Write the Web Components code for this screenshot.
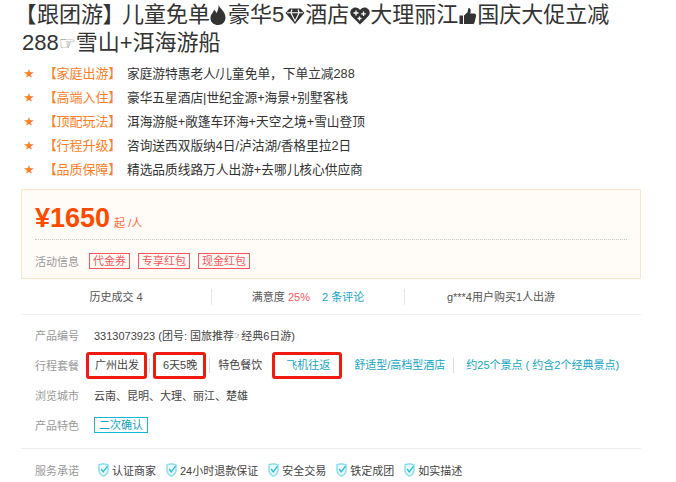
<!DOCTYPE html>
<html lang="zh">
<head>
<meta charset="utf-8">
<title>产品详情</title>
<style>
  html, body { margin: 0; background: #fff; }
  body { font-family: "Liberation Sans", "Noto Sans CJK SC", sans-serif; color: #333; overflow: hidden; }
</style>
</head>
<body>
<product-info></product-info>
<script>
const ICONS = {
  fire: '<path d="M10.500 .5c.6 3.600 7 6.500 7 13 0 4.500-3.200 7.500-7.200 7.500C6 21 2.500 18.500 2.500 14.200c0-4 2.800-5.200 3.500-8.400 1.400.8 2 2 2.200 3.400C9.800 7.200 11 4 10.500 .5z" fill="#333"/>',
  gem: '<path d="M5.500 4.500h11l4 4.500L11 20 1.500 9z" fill="#333"/><path d="M3 8.800h16M8 5.500 6.800 8.800 11 17l4.200-8.200L14 5.500" stroke="#fff" stroke-width="1.100" fill="none"/>',
  heart: '<path d="M11 20.500 2.500 12C-.5 8 2.500 3.500 6.500 3.500c2 0 3.500 1 4.500 2.500 1-1.500 2.500-2.500 4.500-2.500 4 0 7 4.500 4 8.500z" fill="#333"/><path d="M7 6.500v5M4.500 9h5M14.500 7.500v4.500M12.200 9.800h4.600M10.500 12.500v4M8.500 14.500h4" stroke="#fff" stroke-width="1.300" fill="none"/>',
  thumb: '<path d="M2.500 11.500h3.500v8.500H2.500zM7 11.500l3.500-3.200L11.500 4c2 0 2.800 2.300 1.800 5.500h3.700c1.800 0 2.500 1.500 2 3l-1.500 6c-.3 1.200-1 1.500-2 1.500H7z" fill="#333"/>'
};

class TitleIcon extends HTMLElement {
  connectedCallback() {
    this.attachShadow({ mode: 'open' });
    this.shadowRoot.innerHTML = `
      <style>
        :host { display: inline-block; width: var(--w, 20px); height: 22px; vertical-align: -4px; }
        svg { display: block; width: 22px; height: 22px; margin-left: calc((var(--w, 20px) - 22px) / 2); }
      </style>
      <svg viewBox="0 0 22 22">${ICONS[this.getAttribute('name')]}</svg>`;
  }
}
customElements.define('title-icon', TitleIcon);

class ProductTitle extends HTMLElement {
  connectedCallback() {
    this.attachShadow({ mode: 'open' });
    this.shadowRoot.innerHTML = `
      <style>
        :host { display: block; width: 620px; margin-left: 22px; padding-top: 1px; font-size: 22px; line-height: 28px; color: #333; }
      </style>
      <slot></slot>`;
  }
}
customElements.define('product-title', ProductTitle);

class SellingPoint extends HTMLElement {
  connectedCallback() {
    this.attachShadow({ mode: 'open' });
    this.shadowRoot.innerHTML = `
      <style>
        :host { display: flex; height: 24px; align-items: center; font-size: 12.700px; color: #333; white-space: nowrap; }
        .star { box-sizing: border-box; width: 50px; padding-left: 24px; color: #ff7d26; font-size: 10px; }
        .tag { width: 77px; color: #ff7d26; font-size: 13px; font-feature-settings: "palt"; }
      </style>
      <span class="star">★</span>
      <span class="tag">【${this.getAttribute('tag')}】</span>
      <span><slot></slot></span>`;
  }
}
customElements.define('selling-point', SellingPoint);

class PriceBox extends HTMLElement {
  connectedCallback() {
    this.attachShadow({ mode: 'open' });
    this.shadowRoot.innerHTML = `
      <style>
        :host { display: block; box-sizing: border-box; width: 620px; height: 90px; margin-left: 21px; background: #fffcf7; border: 1px solid #fde4cb; padding: 0 13px; }
        .price { height: 50px; box-sizing: border-box; border-bottom: 1px dotted #c9c9c9; display: flex; align-items: baseline; padding-top: 13px; color: #ff4a00; }
        b { font-size: 27px; line-height: 30px; }
        small { margin-left: 4px; font-size: 11px; color: #ff6a3c; }
        .promo { display: flex; align-items: center; box-sizing: border-box; height: 38px; padding-top: 4px; font-size: 11px; color: #999; }
        .promo span { margin-right: 8px; box-sizing: border-box; height: 16px; line-height: 14px; border: 1px solid #f9565e; color: #f9565e; padding: 0 3px; }
        .promo label { width: 54px; }
      </style>
      <div class="price"><b>¥1650</b><small>起 /人</small></div>
      <div class="promo"><label>活动信息</label><span>代金券</span><span>专享红包</span><span>现金红包</span></div>`;
  }
}
customElements.define('price-box', PriceBox);

class StatsBar extends HTMLElement {
  connectedCallback() {
    this.attachShadow({ mode: 'open' });
    this.shadowRoot.innerHTML = `
      <style>
        :host { display: grid; grid-template-columns: 190px 193px 193px; box-sizing: border-box; width: 620px; height: 36px; margin-left: 21px; border-bottom: 1px solid #eee; font-size: 11px; color: #555; align-items: center; text-align: center; }
        div { height: 16px; line-height: 16px; }
        div + div { border-left: 1px solid #e6e6e6; }
        .r { color: #f9565e; }
        .c { color: #12a5c4; margin-left: 12px; }
      </style>
      <div>历史成交 4</div>
      <div>满意度 <span class="r">25%</span><span class="c">2 条评论</span></div>
      <div>g***4用户购买1人出游</div>`;
  }
}
customElements.define('stats-bar', StatsBar);

class InfoRow extends HTMLElement {
  connectedCallback() {
    this.attachShadow({ mode: 'open' });
    this.shadowRoot.innerHTML = `
      <style>
        :host { display: flex; align-items: center; height: 30px; padding-left: 35px; font-size: 11px; color: #444; white-space: nowrap; }
        label { width: 59px; flex: none; color: #999; }
      </style>
      <label>${this.getAttribute('label')}</label><slot></slot>`;
  }
}
customElements.define('info-row', InfoRow);

class RouteOption extends HTMLElement {
  connectedCallback() {
    this.attachShadow({ mode: 'open' });
    this.shadowRoot.innerHTML = `
      <style>
        :host { display: block; flex: none; box-sizing: border-box; line-height: 21px; white-space: nowrap; }
        :host([marked]) { border: 3px solid #f01a10; border-radius: 3px; }
        :host([link]) { color: #12a5c4; }
      </style>
      <slot></slot>`;
  }
}
customElements.define('route-option', RouteOption);

class ServiceItem extends HTMLElement {
  connectedCallback() {
    this.attachShadow({ mode: 'open' });
    this.shadowRoot.innerHTML = `
      <style>
        :host { display: inline-flex; align-items: center; gap: 3px; margin-right: 10px; font-size: 11px; color: #444; white-space: nowrap; }
        svg { width: 11px; height: 14px; flex: none; }
      </style>
      <svg viewBox="0 0 11 14"><path d="M1 1.800 5.500.8l4.500 1V7.500c0 2.700-2.200 4.500-4.500 5.700C3.200 12 1 10.200 1 7.500z" fill="#e9f9fc" stroke="#8ce0ee" stroke-width="1.500"/><path d="M3.200 6 5.200 8.800 9.500 3.200" fill="none" stroke="#29bdd6" stroke-width="1.300"/></svg>
      <slot></slot>`;
  }
}
customElements.define('service-item', ServiceItem);

class ProductInfo extends HTMLElement {
  connectedCallback() {
    this.attachShadow({ mode: 'open' });
    this.shadowRoot.innerHTML = `
      <style>
        :host { display: block; width: 676px; height: 482px; overflow: hidden; }
        .points { margin: 3px 0 9px; }
        .list { padding-top: 4px; height: 133px; box-sizing: border-box; }
        .sep { width: 620px; margin-left: 21px; border-top: 1px solid #eee; }
        i { width: 1px; height: 15px; background: #ddd; flex: none; }
        .tag { box-sizing: border-box; border: 1px solid #16b8d4; color: #12a5c4; height: 16px; line-height: 14px; padding: 0 4px; }
        .foot label { color: #999; font-size: 11px; width: 63px; }
        .foot { display: flex; align-items: center; padding: 13px 0 0 35px; }
        .bracket { font-feature-settings: "palt"; }
        .open { padding-left: 3px; margin-right: 1px; }
        .close { margin-right: 8px; }
        .hand { font-family: "DejaVu Sans", sans-serif; font-size: 19px; color: #777; }
        .small-hand { font-family: "DejaVu Sans", sans-serif; font-size: 8px; color: #333; }
      </style>
      <product-title><span class="bracket open">【</span>跟团游<span class="bracket close">】</span>儿童免单<title-icon name="fire" style="--w:18px"></title-icon>豪华5<title-icon name="gem" style="--w:21px"></title-icon>酒店<title-icon name="heart" style="--w:21px"></title-icon>大理丽江<title-icon name="thumb" style="--w:19px"></title-icon>国庆大促立减<br>288<span class="hand">☞</span>雪山+洱海游船</product-title>
      <div class="points">
        <selling-point tag="家庭出游">家庭游特惠老人/儿童免单，下单立减288</selling-point>
        <selling-point tag="高端入住">豪华五星酒店|世纪金源+海景+别墅客栈</selling-point>
        <selling-point tag="顶配玩法">洱海游艇+敞篷车环海+天空之境+雪山登顶</selling-point>
        <selling-point tag="行程升级">咨询送西双版纳4日/泸沽湖/香格里拉2日</selling-point>
        <selling-point tag="品质保障">精选品质线路万人出游+去哪儿核心供应商</selling-point>
      </div>
      <price-box></price-box>
      <stats-bar></stats-bar>
      <div class="list">
        <info-row label="产品编号" style="height:30px;padding-top:1px">3313073923 (团号: 国旅推荐<span class="small-hand">☞</span>经典6日游)</info-row>
        <info-row label="行程套餐">
          <route-option marked style="margin-left:-8px;padding:0 5px 0 6px">广州出发</route-option>
          <i style="margin:0 3px 0 2px"></i>
          <route-option marked style="padding:0 6px 0 7px">6天5晚</route-option>
          <i style="margin:0 8px 0 3px"></i>
          <route-option>特色餐饮</route-option>
          <route-option marked link style="margin-left:10px;padding:0 9px 0 11px">飞机往返</route-option>
          <route-option link style="margin-left:12px">舒适型/高档型酒店</route-option>
          <i style="margin:0 12px 0 8px"></i>
          <route-option link>约25个景点 ( 约含2个经典景点)</route-option>
        </info-row>
        <info-row label="浏览城市">云南、昆明、大理、丽江、楚雄</info-row>
        <info-row label="产品特色"><span class="tag">二次确认</span></info-row>
      </div>
      <div class="sep"></div>
      <div class="foot">
        <label>服务承诺</label>
        <service-item>认证商家</service-item>
        <service-item>24小时退款保证</service-item>
        <service-item>安全交易</service-item>
        <service-item>铁定成团</service-item>
        <service-item>如实描述</service-item>
      </div>`;
  }
}
customElements.define('product-info', ProductInfo);
</script>
</body>
</html>
